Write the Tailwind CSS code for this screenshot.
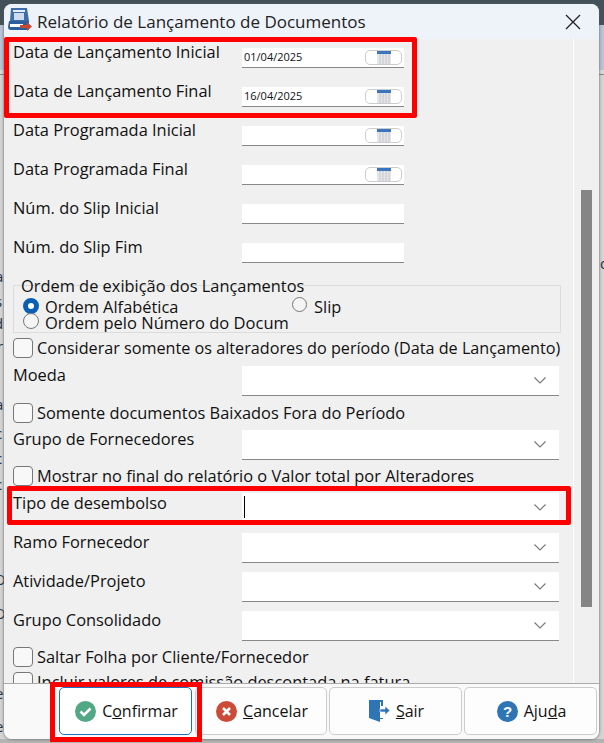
<!DOCTYPE html>
<html lang="en">
<head>
    <meta charset="UTF-8">
    <title>Relatório de Lançamento de Documentos</title>
    <script src="https://cdn.jsdelivr.net/npm/@tailwindcss/browser@4"></script>
</head>
<body class="relative w-[604px] h-[743px] overflow-hidden bg-[#c4c4c4] font-['Open_Sans',sans-serif] text-[16.4px] leading-6 text-[#111]">
    <!-- desktop behind the dialog -->
    <div class="absolute inset-x-0 top-0 h-[25px] bg-[#43525a]"></div>
    <div class="absolute inset-x-0 top-[25px] h-[45px] bg-[#b8c4d6]"></div>
    <div class="absolute inset-x-0 top-[70px] h-[5px] bg-[#d8d8d8] border-b border-[#888]"></div>
    <div class="absolute inset-x-0 top-[75px] bottom-0 bg-[#d4d4d4]"></div>
    <div class="absolute inset-x-0 bottom-0 h-1 bg-[#b4b4b4]"></div>
    <div class="absolute left-[-5px] top-[264px] text-[15px] text-[#234]">a</div>
    <div class="absolute left-[-5px] top-[289px] text-[15px] text-[#234]">s</div>
    <div class="absolute left-[-6px] top-[311px] text-[15px] text-[#234]">d</div>
    <div class="absolute left-[-3px] top-[334px] text-[15px] text-[#234]">r</div>
    <div class="absolute left-[-5px] top-[392px] text-[15px] text-[#234]">a</div>
    <div class="absolute left-[-5px] top-[421px] text-[15px] text-[#234]">c</div>
    <div class="absolute left-[-5px] top-[446px] text-[15px] text-[#234]">c</div>
    <div class="absolute left-[-5px] top-[472px] text-[15px] text-[#234]">c</div>
    <div class="absolute left-[-6px] top-[567px] text-[15px] text-[#234]">O</div>
    <div class="absolute left-[-6px] top-[601px] text-[15px] text-[#234]">O</div>
    <div class="absolute left-[-5px] top-[681px] text-[15px] text-[#234]">e</div>
    <div class="absolute left-[-5px] top-[714px] text-[15px] text-[#234]">e</div>
    <div class="absolute left-[600px] top-[251px] text-[15px] text-[#234]">d</div>

    <div class="relative ml-1 mt-1 w-[595px] h-[735px]">
        <!-- window -->
        <div class="h-full flex flex-col rounded-lg overflow-hidden bg-[#f0f0f0] shadow-[0_0_3px_#555]">
            <div class="h-[35px] shrink-0 flex items-center bg-[#eef3fa] pl-1 pr-[18px]">
                <svg class="-mt-1" width="24" height="23" viewBox="0 0 24 23">
                    <path d="M3 0H19L21 13H2Z" fill="#3d6ea8"/>
                    <path d="M5 2H17V4H5Z" fill="#e8eef8"/>
                    <path d="M6 5H16V12H6Z" fill="#cfdcf0"/>
                    <path d="M1 13H21V22H3Q0 22 0 19Z" fill="#2c5f9e"/>
                    <path d="M2 16H15V19H2Z" fill="#fff"/>
                    <path d="M12 17H19V14L24 18.500L19 23V20H12Z" fill="#c9472f"/>
                </svg>
                <div class="ml-[5px] flex-1 text-[17px] text-[#222]">Relatório de Lançamento de Documentos</div>
                <svg width="16" height="16" viewBox="0 0 16 16" fill="none" stroke="#222" stroke-width="1.3"><path d="M1 1l14 14M15 1L1 15"/></svg>
            </div>

            <div class="flex-1 flex min-h-0">
                <!-- form -->
                <div class="w-[570px] overflow-hidden border-r border-white pl-[9px]">
                    <div class="flex h-[39px] pt-[9px]"><div class="w-[229px] -mt-2">Data de Lançamento Inicial</div><div class="w-[162px] h-5 bg-white border-b border-[#888] flex items-center justify-between px-[2px] text-[11px]"><span class="-mt-px">01/04/2025</span><div class="w-[37px] h-[15px] rounded-[5px] border border-[#ccc] flex justify-center"><svg width="14" height="13" viewBox="0 0 14 13"><path d="M0 0h14v13H0z" fill="#e4e6ea"/><path d="M0 0h14v3H0z" fill="#3a75bd"/><path d="M3 3v10M6 3v10M9 3v10M12 3v10" stroke="#c4c6ca"/></svg></div></div></div>
                    <div class="flex h-[39px] pt-[9px]"><div class="w-[229px] -mt-2">Data de Lançamento Final</div><div class="w-[162px] h-5 bg-white border-b border-[#888] flex items-center justify-between px-[2px] text-[11px]"><span class="-mt-px">16/04/2025</span><div class="w-[37px] h-[15px] rounded-[5px] border border-[#ccc] flex justify-center"><svg width="14" height="13" viewBox="0 0 14 13"><path d="M0 0h14v13H0z" fill="#e4e6ea"/><path d="M0 0h14v3H0z" fill="#3a75bd"/><path d="M3 3v10M6 3v10M9 3v10M12 3v10" stroke="#c4c6ca"/></svg></div></div></div>
                    <div class="flex h-[39px] pt-[9px]"><div class="w-[229px] -mt-2">Data Programada Inicial</div><div class="w-[162px] h-5 bg-white border-b border-[#888] flex items-center justify-end px-[2px]"><div class="w-[37px] h-[15px] rounded-[5px] border border-[#ccc] flex justify-center"><svg width="14" height="13" viewBox="0 0 14 13"><path d="M0 0h14v13H0z" fill="#e4e6ea"/><path d="M0 0h14v3H0z" fill="#3a75bd"/><path d="M3 3v10M6 3v10M9 3v10M12 3v10" stroke="#c4c6ca"/></svg></div></div></div>
                    <div class="flex h-[39px] pt-[9px]"><div class="w-[229px] -mt-2">Data Programada Final</div><div class="w-[162px] h-5 bg-white border-b border-[#888] flex items-center justify-end px-[2px]"><div class="w-[37px] h-[15px] rounded-[5px] border border-[#ccc] flex justify-center"><svg width="14" height="13" viewBox="0 0 14 13"><path d="M0 0h14v13H0z" fill="#e4e6ea"/><path d="M0 0h14v3H0z" fill="#3a75bd"/><path d="M3 3v10M6 3v10M9 3v10M12 3v10" stroke="#c4c6ca"/></svg></div></div></div>
                    <div class="flex h-[39px] pt-[9px]"><div class="w-[229px] -mt-2">Núm. do Slip Inicial</div><div class="w-[162px] h-5 bg-white border-b border-[#888]"></div></div>
                    <div class="flex h-[39px] pt-[9px]"><div class="w-[229px] -mt-2">Núm. do Slip Fim</div><div class="w-[162px] h-5 bg-white border-b border-[#888]"></div></div>

                    <!-- radio group -->
                    <div class="relative mt-3 w-[548px] h-[48px] border border-[#dcdcdc] leading-4">
                        <div class="absolute left-[7px] -top-2 whitespace-nowrap">Ordem de exibição dos Lançamentos</div>
                        <div class="absolute left-[9px] top-3 w-4 h-4 rounded-full border-[5px] border-[#0a5fb4] bg-white"></div>
                        <div class="absolute left-[31px] top-[13px]">Ordem Alfabética</div>
                        <div class="absolute left-[9px] top-[27px] w-4 h-4 rounded-full border border-[#777] bg-[#f5f5f5]"></div>
                        <div class="absolute left-[31px] top-[29px] h-[17px] overflow-hidden whitespace-nowrap text-[16.5px]">Ordem pelo Número do Docum</div>
                        <div class="absolute left-[278px] top-[11px] w-[15px] h-[15px] rounded-full border border-[#777] bg-[#f5f5f5]"></div>
                        <div class="absolute left-[300px] top-[13px]">Slip</div>
                    </div>

                    <div class="flex items-center h-[26px] mt-[2px] whitespace-nowrap overflow-hidden w-[549px] text-[16.2px]"><div class="w-5 h-5 rounded-[4px] border border-[#777] bg-[#f8f8f8] mr-1 shrink-0"></div>Considerar somente os alteradores do período (Data de Lançamento)</div>
                    <div class="flex h-[39px] pt-[5px]"><div class="w-[229px] -mt-[3px]">Moeda</div><div class="w-[317px] h-[30px] bg-white border-b border-[#888] flex items-center justify-end pr-[13px]"><svg width="12" height="7" viewBox="0 0 12 7" fill="none" stroke="#777" stroke-width="1.1"><path d="M.5 .5L6 6L11.500 .5"/></svg></div></div>
                    <div class="flex items-center h-[26px]"><div class="w-5 h-5 rounded-[4px] border border-[#777] bg-[#f8f8f8] mr-1"></div>Somente documentos Baixados Fora do Período</div>
                    <div class="flex h-[38px] pt-1"><div class="w-[229px] -mt-[3px]">Grupo de Fornecedores</div><div class="w-[317px] h-[30px] bg-white border-b border-[#888] flex items-center justify-end pr-[13px]"><svg width="12" height="7" viewBox="0 0 12 7" fill="none" stroke="#777" stroke-width="1.1"><path d="M.5 .5L6 6L11.500 .5"/></svg></div></div>
                    <div class="flex items-center h-[24px]"><div class="w-5 h-5 rounded-[4px] border border-[#777] bg-[#f8f8f8] mr-1"></div>Mostrar no final do relatório o Valor total por Alteradores</div>
                    <div class="flex h-[45px] pt-[5px]"><div class="w-[229px] -mt-[2px]">Tipo de desembolso</div><div class="relative w-[317px] h-[30px] bg-white border-b border-[#888] flex items-center justify-end pr-[13px]"><div class="absolute left-[2px] top-[3px] w-px h-[22px] bg-black"></div><svg width="12" height="7" viewBox="0 0 12 7" fill="none" stroke="#777" stroke-width="1.1"><path d="M.5 .5L6 6L11.500 .5"/></svg></div></div>
                    <div class="flex h-[39px]"><div class="w-[229px] -mt-[3px]">Ramo Fornecedor</div><div class="w-[317px] h-[30px] bg-white border-b border-[#888] flex items-center justify-end pr-[13px]"><svg width="12" height="7" viewBox="0 0 12 7" fill="none" stroke="#777" stroke-width="1.1"><path d="M.5 .5L6 6L11.500 .5"/></svg></div></div>
                    <div class="flex h-[39px]"><div class="w-[229px] -mt-[3px]">Atividade/Projeto</div><div class="w-[317px] h-[30px] bg-white border-b border-[#888] flex items-center justify-end pr-[13px]"><svg width="12" height="7" viewBox="0 0 12 7" fill="none" stroke="#777" stroke-width="1.1"><path d="M.5 .5L6 6L11.500 .5"/></svg></div></div>
                    <div class="flex h-[34px]"><div class="w-[229px] -mt-[3px]">Grupo Consolidado</div><div class="w-[317px] h-[30px] bg-white border-b border-[#888] flex items-center justify-end pr-[13px]"><svg width="12" height="7" viewBox="0 0 12 7" fill="none" stroke="#777" stroke-width="1.1"><path d="M.5 .5L6 6L11.500 .5"/></svg></div></div>
                    <div class="flex items-center h-[24px]"><div class="w-5 h-5 rounded-[4px] border border-[#777] bg-[#f8f8f8] mr-1"></div>Saltar Folha por Cliente/Fornecedor</div>
                    <div class="flex items-center h-[24px] mt-px"><div class="w-5 h-5 rounded-[4px] border border-[#777] bg-[#f8f8f8] mr-1"></div>Incluir valores de comissão descontada na fatura</div>
                </div>
                <!-- scrollbar -->
                <div class="flex-1 pl-[7px] pt-[151px] pb-[76px]"><div class="w-[11px] h-full bg-[#858585]"></div></div>
            </div>

            <!-- buttons -->
            <div class="h-[56px] shrink-0 flex gap-[2px] pl-[55px] pr-[2px] pt-[3px] pb-1 bg-[#f9f9f9] border-t border-[#aaa] text-base">
                <button class="w-[133px] mr-px pl-[2px] flex items-center justify-center gap-[6px] rounded-[5px] bg-white border border-[#1a73c0]"><svg width="21" height="21" viewBox="0 0 21 21"><circle cx="10.5" cy="10.5" r="10.5" fill="#52a884"/><path d="M5.500 10.500l3.500 3.500 6.500-6.500" fill="none" stroke="#fff" stroke-width="2.6"/></svg><span>C<u>o</u>nfirmar</span></button>
                <button class="w-[132px] pl-[2px] flex items-center justify-center gap-[6px] rounded-[5px] bg-[#fdfdfd] border border-[#ccc]"><svg width="21" height="21" viewBox="0 0 21 21"><circle cx="10.5" cy="10.5" r="10.5" fill="#cc4a38"/><path d="M7 7l7 7M14 7l-7 7" fill="none" stroke="#fff" stroke-width="2.6"/></svg><span><u>C</u>ancelar</span></button>
                <button class="w-[133px] pl-[2px] flex items-center justify-center gap-[6px] rounded-[5px] bg-[#fdfdfd] border border-[#ccc]"><svg width="21" height="22" viewBox="0 0 21 22"><path d="M0 0H14V6H12V2H11V18H14V14H12V14H14V19H11V22L0 18Z" fill="#2f75b5"/><path d="M11 9H16V6L21 10.500L16 15V12H11Z" fill="#2f75b5" stroke="#fdfdfd" stroke-width=".6"/></svg><span><u>S</u>air</span></button>
                <button class="w-[133px] pl-[2px] flex items-center justify-center gap-[6px] rounded-[5px] bg-[#fdfdfd] border border-[#ccc]"><svg width="21" height="21" viewBox="0 0 21 21"><circle cx="10.5" cy="10.5" r="10.5" fill="#2f75b5"/><text x="10.5" y="16" text-anchor="middle" font-family="Liberation Sans" font-weight="700" font-size="15" fill="#fff">?</text></svg><span>Aju<u>d</u>a</span></button>
            </div>
        </div>

        <!-- red highlight boxes -->
        <div class="absolute left-0 top-[33px] w-[413px] h-[81px] rounded-[2px] border-[5px] border-[#ff0000]"></div>
        <div class="absolute left-[3px] top-[482px] w-[564px] h-[39px] rounded-[2px] border-[5px] border-[#ff0000]"></div>
        <div class="absolute left-[46px] top-[678px] w-[152px] h-[60px] border-[5px] border-[#ff0000]"></div>
    </div>
</body>
</html>
